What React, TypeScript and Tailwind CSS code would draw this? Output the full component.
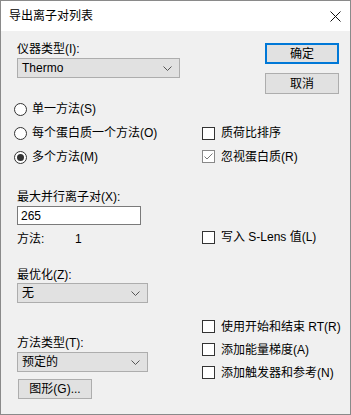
const font = "font-['Liberation_Sans','Noto_Sans_CJK_SC',sans-serif]"

const Chevron = () => (
  <svg width="9" height="5" viewBox="0 0 9 5" className="shrink-0">
    <path d="M0.5 0.5 L4.5 4.5 L8.5 0.5" fill="none" stroke="#555" strokeWidth="1" />
  </svg>
)

const Select = ({ value, width }: { value: string; width: string }) => (
  <div className={`${width} h-[20px] bg-[#e1e1e1] border border-[#adadad] flex items-center justify-between pl-[4px] pr-[7px]`}>
    <span className="text-[12px] leading-[16px] text-black">{value}</span>
    <Chevron />
  </div>
)

const Radio = ({ label, checked }: { label: string; checked?: boolean }) => (
  <div className="h-[24px] flex items-center">
    <div className="w-[13px] h-[13px] rounded-full border border-[#333] bg-white flex items-center justify-center">
      {checked && <div className="w-[7px] h-[7px] rounded-full bg-[#333]" />}
    </div>
    <span className="ml-[5px] text-[12px] leading-[16px] whitespace-nowrap">{label}</span>
  </div>
)

const Check = ({ label, checked, dim }: { label: string; checked?: boolean; dim?: boolean }) => (
  <div className="flex items-center">
    <div className={`w-[13px] h-[13px] shrink-0 border bg-white flex items-center justify-center ${dim ? 'border-[#888]' : 'border-[#333]'}`}>
      {checked && (
        <svg width="9" height="7" viewBox="0 0 9 7">
          <path d="M0.5 3.5 L3 6 L8.5 0.5" fill="none" stroke="#777" strokeWidth="1" />
        </svg>
      )}
    </div>
    <span className="ml-[6px] text-[12px] leading-[16px] whitespace-nowrap">{label}</span>
  </div>
)

const App = () => {
  return (
    <div className={`w-[351px] h-[415px] border border-[#8a8a8a] bg-[#f0f0f0] flex flex-col text-black ${font}`}>
      <div className="h-[30px] bg-white flex items-center justify-between pl-[8px] pr-[9px] shrink-0">
        <span className="text-[12px] leading-[16px]">导出离子对列表</span>
        <svg width="11" height="11" viewBox="0 0 11 11">
          <path d="M0.5 0.5 L10.5 10.5 M10.5 0.5 L0.5 10.5" stroke="#111" strokeWidth="1" />
        </svg>
      </div>

      <div className="flex flex-col pl-[13px] pr-[11px]">
        <div className="h-[66px] flex justify-between">
          <div className="mt-[10px] ml-[3px] flex flex-col gap-[1px]">
            <span className="text-[12px] leading-[16px]">仪器类型(I):</span>
            <Select value="Thermo" width="w-[163px]" />
          </div>
          <div className="mt-[12px] flex flex-col gap-[9px]">
            <button className="w-[74px] h-[21px] bg-[#e1e1e1] border-2 border-[#0078d7] text-[12px] leading-[16px]">确定</button>
            <button className="w-[74px] h-[21px] bg-[#e1e1e1] border border-[#adadad] text-[12px] leading-[16px]">取消</button>
          </div>
        </div>

        <div className="grid grid-cols-[188px_1fr]">
          <div className="flex flex-col">
            <Radio label="单一方法(S)" />
            <Radio label="每个蛋白质一个方法(O)" />
            <Radio label="多个方法(M)" checked />
          </div>
          <div className="flex flex-col pt-[24px]">
            <div className="h-[24px] flex items-center">
              <Check label="质荷比排序" />
            </div>
            <div className="h-[24px] flex items-center pb-[1px]">
              <Check label="忽视蛋白质(R)" checked dim />
            </div>
          </div>
        </div>

        <div className="mt-[20px] ml-[3px] flex flex-col">
          <span className="text-[12px] leading-[16px]">最大并行离子对(X):</span>
          <div className="mt-[1px] w-[124px] h-[19px] bg-white border border-[#7a7a7a] flex items-center pl-[3px]">
            <span className="text-[12px] leading-[16px]">265</span>
          </div>
        </div>

        <div className="mt-[4px] h-[20px] grid grid-cols-[188px_1fr] items-center">
          <div className="flex items-center pl-[3px] text-[12px] leading-[16px]">
            <span className="w-[58px]">方法:</span>
            <span>1</span>
          </div>
          <div className="pb-[4px]">
            <Check label="写入 S-Lens 值(L)" />
          </div>
        </div>

        <div className="mt-[18px] ml-[3px] flex flex-col">
          <span className="text-[12px] leading-[16px]">最优化(Z):</span>
          <Select value="无" width="w-[131px]" />
        </div>

        <div className="mt-[12px] grid grid-cols-[188px_1fr]">
          <div className="pt-[20px] flex flex-col">
            <span className="ml-[3px] text-[12px] leading-[16px]">方法类型(T):</span>
            <div className="ml-[3px] mt-[1px]">
              <Select value="预定的" width="w-[131px]" />
            </div>
            <button className="ml-[4px] mt-[7px] w-[74px] h-[20px] bg-[#e1e1e1] border border-[#adadad] text-[12px] leading-[16px]">图形(G)...</button>
          </div>
          <div className="flex flex-col">
            <div className="h-[23px] flex items-center">
              <Check label="使用开始和结束 RT(R)" />
            </div>
            <div className="h-[23px] flex items-center">
              <Check label="添加能量梯度(A)" />
            </div>
            <div className="h-[23px] flex items-center">
              <Check label="添加触发器和参考(N)" />
            </div>
          </div>
        </div>
      </div>
    </div>
  )
}

export default App
